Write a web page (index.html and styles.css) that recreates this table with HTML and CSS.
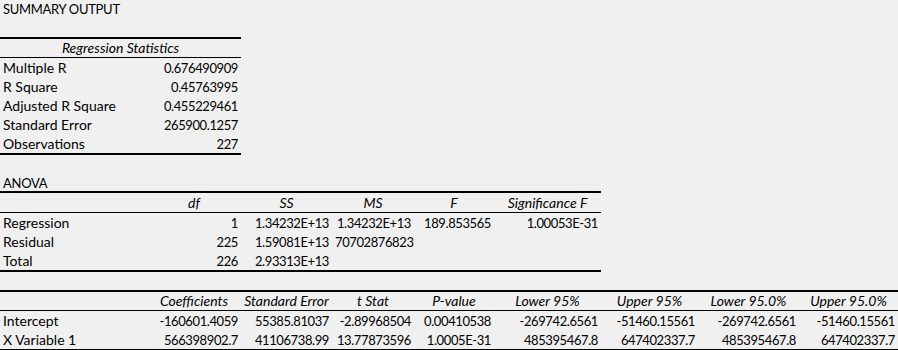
FILE: index.html
```html
<!DOCTYPE html>
<html>
<head>
<meta charset="utf-8">
<link rel="stylesheet" href="styles.css">
</head>
<body>
<div class="sheet">
  <div class="line title"><span class="c caps">SUMMARY OUTPUT</span></div>
  <div class="line gap"></div>

  <div class="tbl t1">
    <div class="row head"><span class="c ctr it span2">Regression Statistics</span></div>
    <div class="row"><span class="c">Multiple R</span><span class="c num">0.676490909</span></div>
    <div class="row"><span class="c">R Square</span><span class="c num">0.45763995</span></div>
    <div class="row"><span class="c">Adjusted R Square</span><span class="c num">0.455229461</span></div>
    <div class="row"><span class="c">Standard Error</span><span class="c num">265900.1257</span></div>
    <div class="row"><span class="c">Observations</span><span class="c num">227</span></div>
  </div>

  <div class="line gap"></div>
  <div class="line sub"><span class="c caps">ANOVA</span></div>

  <div class="tbl t2">
    <div class="row head">
      <span class="c"></span>
      <span class="c ctr it">df</span>
      <span class="c ctr it">SS</span>
      <span class="c ctr it">MS</span>
      <span class="c ctr it">F</span>
      <span class="c ctr it">Significance F</span>
    </div>
    <div class="row">
      <span class="c">Regression</span>
      <span class="c num">1</span>
      <span class="c num">1.34232E+13</span>
      <span class="c num">1.34232E+13</span>
      <span class="c num">189.853565</span>
      <span class="c num">1.00053E-31</span>
    </div>
    <div class="row">
      <span class="c">Residual</span>
      <span class="c num">225</span>
      <span class="c num">1.59081E+13</span>
      <span class="c num">70702876823</span>
      <span class="c"></span>
      <span class="c"></span>
    </div>
    <div class="row">
      <span class="c">Total</span>
      <span class="c num">226</span>
      <span class="c num">2.93313E+13</span>
      <span class="c"></span>
      <span class="c"></span>
      <span class="c"></span>
    </div>
  </div>

  <div class="line gap"></div>

  <div class="tbl t3">
    <div class="row head">
      <span class="c"></span>
      <span class="c ctr it">Coefficients</span>
      <span class="c ctr it">Standard Error</span>
      <span class="c ctr it">t Stat</span>
      <span class="c ctr it">P-value</span>
      <span class="c ctr it">Lower 95%</span>
      <span class="c ctr it">Upper 95%</span>
      <span class="c ctr it">Lower 95.0%</span>
      <span class="c ctr it">Upper 95.0%</span>
    </div>
    <div class="row">
      <span class="c">Intercept</span>
      <span class="c num">-160601.4059</span>
      <span class="c num">55385.81037</span>
      <span class="c num">-2.89968504</span>
      <span class="c num">0.00410538</span>
      <span class="c num">-269742.6561</span>
      <span class="c num">-51460.15561</span>
      <span class="c num">-269742.6561</span>
      <span class="c num">-51460.15561</span>
    </div>
    <div class="row">
      <span class="c">X Variable 1</span>
      <span class="c num">566398902.7</span>
      <span class="c num">41106738.99</span>
      <span class="c num">13.77873596</span>
      <span class="c num">1.0005E-31</span>
      <span class="c num">485395467.8</span>
      <span class="c num">647402337.7</span>
      <span class="c num">485395467.8</span>
      <span class="c num">647402337.7</span>
    </div>
  </div>
</div>
</body>
</html>
```

FILE: styles.css
```css
html, body {
  margin: 0;
  padding: 0;
  background: #f0f0f0;
}

body {
  font-family: "Lato", "Open Sans", sans-serif;
  font-size: 14px;
  color: #000;
}

.sheet {
  width: 898px;
  height: 350px;
  overflow: hidden;
}

.line {
  display: flex;
  height: 19px;
  line-height: 19px;
  white-space: nowrap;
}

.line.gap {
  height: 18px;
}

.line.sub {
  height: 18px;
  line-height: 21px;
}

.title .c,
.sub .c {
  padding-left: 3px;
}

.caps {
  font-size: 13px;
  letter-spacing: -0.3px;
}

.tbl {
  display: grid;
  border-top: 2px solid #000;
  border-bottom: 2px solid #000;
}

.t1 { width: 241px; }
.t2 { width: 601px; }
.t3 { width: 898px; }

.row {
  display: grid;
  height: 19px;
  line-height: 19px;
  white-space: nowrap;
}

.t1 .row { grid-template-columns: 147px 94px; }
.t2 .row { grid-template-columns: 147px 94px 91px 82px 80px 107px; }
.t3 .row { grid-template-columns: 147px 94px 91px 82px 80px 107px 97px 101px 99px; }

.row.head {
  height: 18px;
  line-height: 18px;
  border-bottom: 1px solid #000;
}

.t2 .row.head { height: 19px; line-height: 19px; }

.row:not(.head) .c {
  padding-top: 1px;
  line-height: 18px;
}

.c {
  display: block;
  padding: 0 3px;
  overflow: visible;
}

.num {
  text-align: right;
  font-size: 13px;
  letter-spacing: -0.4px;
}

.ctr { text-align: center; }
.it { font-style: italic; }
.span2 { grid-column: 1 / span 2; }
```
